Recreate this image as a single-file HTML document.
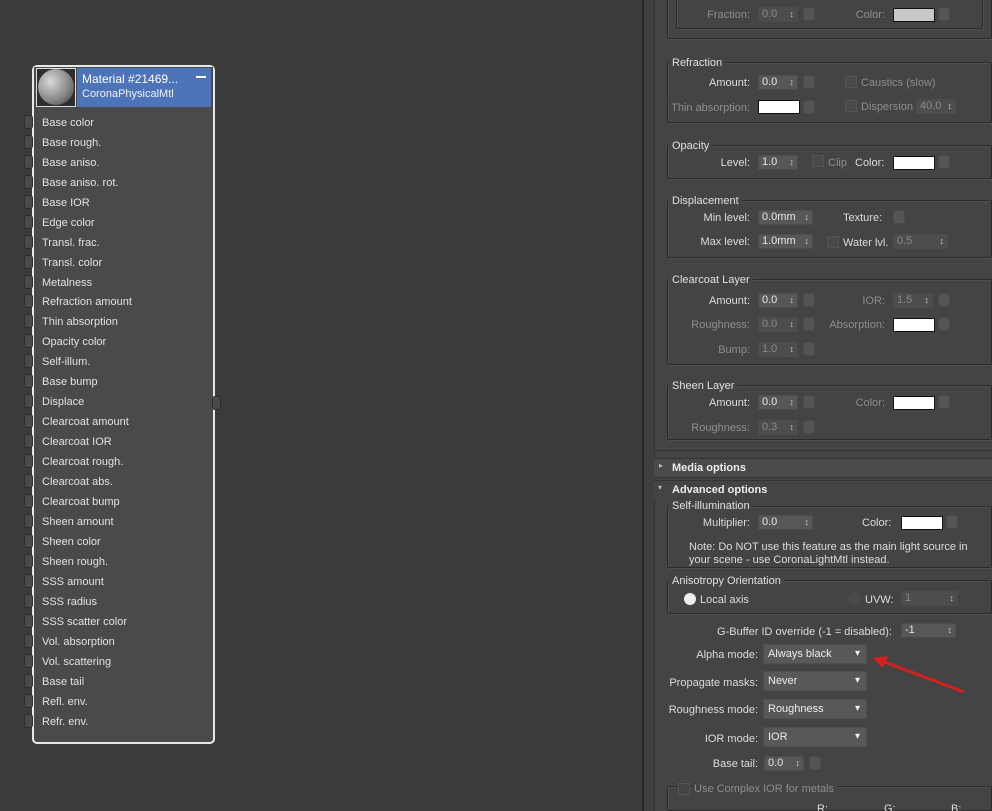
<!DOCTYPE html><html><head><style>
*{margin:0;padding:0;box-sizing:border-box}
html{width:992px;height:811px;overflow:hidden}
body{width:992px;height:811px;background:#3b3b3b;font-family:"Liberation Sans",sans-serif;font-size:11px;color:#dcdcdc;position:relative;overflow:hidden}
.a{position:absolute;white-space:nowrap}
.r{position:absolute;white-space:nowrap;text-align:right}
.d{color:#8e8e8e}
.sp{position:absolute;height:15px;background:#575757;border:1px solid #4c4c4c;padding-left:3px;line-height:13px;color:#e6e6e6}
.sp.d{color:#8a8a8a;background:#4d4d4d}
.sp:after{content:"\2195";position:absolute;right:3px;top:0;font-size:9px;color:#ccc}
.mb{position:absolute;width:12px;height:14px;background:#555;border:1px solid #4a4a4a;border-radius:3px}
.cs{position:absolute;width:42px;height:14px;background:#fff;border:1px solid #111}
.cb{position:absolute;width:12px;height:12px;background:#4a4a4a;border:1px solid #555}
.gb{position:absolute;border:1px solid #2c2c2c;box-shadow:inset 1px 1px 0 #505050,1px 1px 0 #505050;border-radius:2px}
.gl{position:absolute;background:#444;padding:0 3px;color:#e0e0e0}
.dd{position:absolute;height:20px;background:#585858;border:1px solid #4e4e4e;padding-left:4px;line-height:18px;color:#eee}
.dd:after{content:"\25BE";position:absolute;right:6px;top:0;font-size:10px}
.row{position:absolute;left:42px;color:#e2e2e2;font-size:11px}
.con{position:absolute;left:24px;width:9px;height:14px;background:#4a4a4a;border:1px solid #2e2e2e;border-radius:3px}
</style></head><body>
<div class="a" style="left:642px;top:0;width:2px;height:811px;background:#262626"></div>
<div class="a" style="left:644px;top:0;width:348px;height:811px;background:#3f3f3f"></div>
<div class="a" style="left:654px;top:0;width:338px;height:811px;background:#444;border-left:1px solid #333"></div>

<div class="gb" style="left:667px;top:-5px;width:325px;height:44px"></div>
<div class="gb" style="left:676px;top:-5px;width:307px;height:34px"></div>
<div class="r d" style="right:242px;top:9px">Fraction:</div>
<div class="sp d" style="left:758px;top:7px;width:40px">0.0</div><div class="mb" style="left:803px;top:7px"></div>
<div class="r d" style="right:107px;top:9px">Color:</div>
<div class="cs" style="left:893px;top:8px;background:#c8c8c8"></div><div class="mb" style="left:938px;top:7px"></div>

<div class="gb" style="left:667px;top:62px;width:325px;height:61px"></div><div class="gl" style="left:669px;top:57px">Refraction</div>
<div class="r" style="right:242px;top:77px">Amount:</div>
<div class="sp" style="left:758px;top:75px;width:40px">0.0</div><div class="mb" style="left:803px;top:75px"></div>
<div class="cb" style="left:845px;top:76px"></div><div class="a d" style="left:861px;top:77px">Caustics (slow)</div>
<div class="r d" style="right:242px;top:102px">Thin absorption:</div>
<div class="cs" style="left:758px;top:100px"></div><div class="mb" style="left:803px;top:100px"></div>
<div class="cb" style="left:845px;top:100px"></div><div class="a d" style="left:861px;top:101px">Dispersion</div>
<div class="sp d" style="left:916px;top:99px;width:40px">40.0</div>

<div class="gb" style="left:667px;top:145px;width:325px;height:34px"></div><div class="gl" style="left:669px;top:140px">Opacity</div>
<div class="r" style="right:242px;top:157px">Level:</div>
<div class="sp" style="left:758px;top:155px;width:40px">1.0</div>
<div class="cb" style="left:812px;top:155px"></div><div class="a d" style="left:828px;top:157px">Clip</div>
<div class="a" style="left:855px;top:157px">Color:</div>
<div class="cs" style="left:893px;top:156px"></div><div class="mb" style="left:938px;top:155px"></div>

<div class="gb" style="left:667px;top:200px;width:325px;height:58px"></div><div class="gl" style="left:669px;top:195px">Displacement</div>
<div class="r" style="right:242px;top:212px">Min level:</div>
<div class="sp" style="left:758px;top:210px;width:55px">0.0mm</div>
<div class="a" style="left:843px;top:212px">Texture:</div><div class="mb" style="left:893px;top:210px"></div>
<div class="r" style="right:242px;top:236px">Max level:</div>
<div class="sp" style="left:758px;top:234px;width:55px">1.0mm</div>
<div class="cb" style="left:827px;top:236px"></div><div class="a" style="left:843px;top:237px">Water lvl.</div>
<div class="sp d" style="left:893px;top:234px;width:55px">0.5</div>

<div class="gb" style="left:667px;top:279px;width:325px;height:86px"></div><div class="gl" style="left:669px;top:274px">Clearcoat Layer</div>
<div class="r" style="right:242px;top:295px">Amount:</div>
<div class="sp" style="left:758px;top:293px;width:40px">0.0</div><div class="mb" style="left:803px;top:293px"></div>
<div class="r d" style="right:107px;top:295px">IOR:</div>
<div class="sp d" style="left:893px;top:293px;width:40px">1.5</div><div class="mb" style="left:938px;top:293px"></div>
<div class="r d" style="right:242px;top:319px">Roughness:</div>
<div class="sp d" style="left:758px;top:317px;width:40px">0.0</div><div class="mb" style="left:803px;top:317px"></div>
<div class="r d" style="right:107px;top:319px">Absorption:</div>
<div class="cs" style="left:893px;top:318px"></div><div class="mb" style="left:938px;top:317px"></div>
<div class="r d" style="right:242px;top:344px">Bump:</div>
<div class="sp d" style="left:758px;top:342px;width:40px">1.0</div><div class="mb" style="left:803px;top:342px"></div>

<div class="gb" style="left:667px;top:385px;width:325px;height:55px"></div><div class="gl" style="left:669px;top:380px">Sheen Layer</div>
<div class="r" style="right:242px;top:397px">Amount:</div>
<div class="sp" style="left:758px;top:395px;width:40px">0.0</div><div class="mb" style="left:803px;top:395px"></div>
<div class="r d" style="right:107px;top:397px">Color:</div>
<div class="cs" style="left:893px;top:396px"></div><div class="mb" style="left:938px;top:395px"></div>
<div class="r d" style="right:242px;top:422px">Roughness:</div>
<div class="sp d" style="left:758px;top:420px;width:40px">0.3</div><div class="mb" style="left:803px;top:420px"></div>

<div class="a" style="left:654px;top:450px;width:338px;height:1px;background:#333"></div>
<div class="a" style="left:654px;top:458px;width:338px;height:20px;background:#4a4a4a;border-top:1px solid #333;border-bottom:1px solid #333"></div>
<div class="a" style="left:659px;top:461px;font-size:8px;color:#bbb">&#9656;</div>
<div class="a" style="left:672px;top:462px;font-weight:bold;color:#eee">Media options</div>
<div class="a" style="left:654px;top:480px;width:338px;height:20px;background:#444;border-top:1px solid #333"></div>
<div class="a" style="left:658px;top:483px;font-size:8px;color:#bbb">&#9662;</div>
<div class="a" style="left:672px;top:484px;font-weight:bold;color:#eee">Advanced options</div>

<div class="gb" style="left:667px;top:506px;width:325px;height:62px"></div><div class="gl" style="left:669px;top:500px">Self-illumination</div>
<div class="r" style="right:242px;top:517px">Multiplier:</div>
<div class="sp" style="left:758px;top:515px;width:55px">0.0</div>
<div class="a" style="left:862px;top:517px">Color:</div>
<div class="cs" style="left:901px;top:516px"></div><div class="mb" style="left:946px;top:515px"></div>
<div class="a" style="left:689px;top:541px;line-height:13px">Note: Do NOT use this feature as the main light source in<br>your scene - use CoronaLightMtl instead.</div>

<div class="gb" style="left:667px;top:580px;width:325px;height:34px"></div><div class="gl" style="left:669px;top:575px">Anisotropy Orientation</div>
<div class="a" style="left:684px;top:593px;width:12px;height:12px;border-radius:50%;background:#eee"></div>
<div class="a" style="left:700px;top:594px">Local axis</div>
<div class="a" style="left:848px;top:592px;width:13px;height:13px;border-radius:50%;background:#4a4a4a"></div>
<div class="a" style="left:865px;top:594px">UVW:</div>
<div class="sp d" style="left:901px;top:591px;width:57px">1</div>

<div class="r" style="right:100px;top:626px">G-Buffer ID override (-1 = disabled):</div>
<div class="sp" style="left:901px;top:623px;width:55px">-1</div>
<div class="r" style="right:234px;top:649px">Alpha mode:</div>
<div class="dd" style="left:763px;top:644px;width:104px">Always black</div>
<div class="r" style="right:234px;top:677px">Propagate masks:</div>
<div class="dd" style="left:763px;top:671px;width:104px">Never</div>
<div class="r" style="right:234px;top:704px">Roughness mode:</div>
<div class="dd" style="left:763px;top:699px;width:104px">Roughness</div>
<div class="r" style="right:234px;top:733px">IOR mode:</div>
<div class="dd" style="left:763px;top:727px;width:104px">IOR</div>
<div class="r" style="right:234px;top:758px">Base tail:</div>
<div class="sp" style="left:764px;top:756px;width:40px">0.0</div><div class="mb" style="left:809px;top:756px"></div>
<div class="gb" style="left:667px;top:786px;width:325px;height:25px"></div>
<div class="cb" style="left:678px;top:783px;background:#444"></div><div class="a d" style="left:694px;top:783px;background:#444;padding-right:3px">Use Complex IOR for metals</div>
<div class="a" style="left:817px;top:803px">R:</div><div class="a" style="left:884px;top:803px">G:</div><div class="a" style="left:951px;top:803px">B:</div>
<svg class="a" style="left:870px;top:652px" width="100" height="45"><line x1="94" y1="40" x2="12" y2="9" stroke="#d42020" stroke-width="3"/><polygon points="2,6 18,4 13,16" fill="#d42020"/></svg>

<div class="a" style="left:32px;top:65px;width:183px;height:679px;border:2px solid #e8e8e8;border-radius:5px;background:#4a4a4a"></div>
<div class="a" style="left:34px;top:67px;width:179px;height:41px;background:#4a4a4a"></div>
<div class="a" style="left:36px;top:68px;width:40px;height:39px;background:#2e2e2e;border:1px solid #ddd"></div>
<div class="a" style="left:38px;top:69px;width:36px;height:36px;border-radius:50%;background:radial-gradient(circle at 35% 35%,#d8d8d8,#8a8a8a 55%,#3a3a3a)"></div>
<div class="a" style="left:77px;top:68px;width:134px;height:39px;background:#4d74b8"></div>
<div class="a" style="left:82px;top:72px;font-size:12px;color:#fff">Material #21469...</div>
<div class="a" style="left:82px;top:88px;font-size:11px;color:#f0f0f0">CoronaPhysicalMtl</div>
<div class="a" style="left:196px;top:76px;width:10px;height:2px;background:#fff"></div>
<div class="a" style="left:212px;top:396px;width:9px;height:14px;background:#4a4a4a;border:1px solid #2e2e2e;border-radius:3px"></div>
<div class="row" style="top:117px">Base color</div><div class="con" style="top:115px"></div>
<div class="row" style="top:137px">Base rough.</div><div class="con" style="top:135px"></div>
<div class="row" style="top:157px">Base aniso.</div><div class="con" style="top:155px"></div>
<div class="row" style="top:177px">Base aniso. rot.</div><div class="con" style="top:175px"></div>
<div class="row" style="top:197px">Base IOR</div><div class="con" style="top:195px"></div>
<div class="row" style="top:217px">Edge color</div><div class="con" style="top:215px"></div>
<div class="row" style="top:237px">Transl. frac.</div><div class="con" style="top:235px"></div>
<div class="row" style="top:257px">Transl. color</div><div class="con" style="top:255px"></div>
<div class="row" style="top:277px">Metalness</div><div class="con" style="top:275px"></div>
<div class="row" style="top:296px">Refraction amount</div><div class="con" style="top:294px"></div>
<div class="row" style="top:316px">Thin absorption</div><div class="con" style="top:314px"></div>
<div class="row" style="top:336px">Opacity color</div><div class="con" style="top:334px"></div>
<div class="row" style="top:356px">Self-illum.</div><div class="con" style="top:354px"></div>
<div class="row" style="top:376px">Base bump</div><div class="con" style="top:374px"></div>
<div class="row" style="top:396px">Displace</div><div class="con" style="top:394px"></div>
<div class="row" style="top:416px">Clearcoat amount</div><div class="con" style="top:414px"></div>
<div class="row" style="top:436px">Clearcoat IOR</div><div class="con" style="top:434px"></div>
<div class="row" style="top:456px">Clearcoat rough.</div><div class="con" style="top:454px"></div>
<div class="row" style="top:476px">Clearcoat abs.</div><div class="con" style="top:474px"></div>
<div class="row" style="top:496px">Clearcoat bump</div><div class="con" style="top:494px"></div>
<div class="row" style="top:516px">Sheen amount</div><div class="con" style="top:514px"></div>
<div class="row" style="top:536px">Sheen color</div><div class="con" style="top:534px"></div>
<div class="row" style="top:556px">Sheen rough.</div><div class="con" style="top:554px"></div>
<div class="row" style="top:576px">SSS amount</div><div class="con" style="top:574px"></div>
<div class="row" style="top:596px">SSS radius</div><div class="con" style="top:594px"></div>
<div class="row" style="top:616px">SSS scatter color</div><div class="con" style="top:614px"></div>
<div class="row" style="top:636px">Vol. absorption</div><div class="con" style="top:634px"></div>
<div class="row" style="top:656px">Vol. scattering</div><div class="con" style="top:654px"></div>
<div class="row" style="top:676px">Base tail</div><div class="con" style="top:674px"></div>
<div class="row" style="top:696px">Refl. env.</div><div class="con" style="top:694px"></div>
<div class="row" style="top:716px">Refr. env.</div><div class="con" style="top:714px"></div>
</body></html>
